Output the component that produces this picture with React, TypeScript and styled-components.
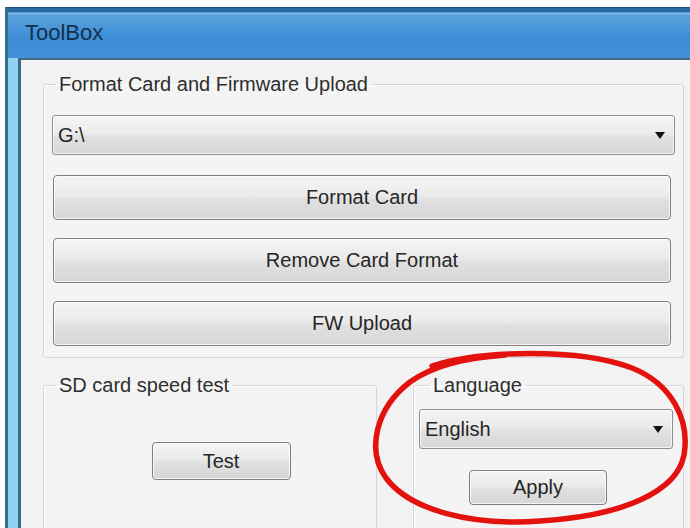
import React from 'react';
import styled, { createGlobalStyle } from 'styled-components';

const GlobalStyle = createGlobalStyle`
  html, body {
    margin: 0;
    padding: 0;
    background: #ffffff;
    overflow: hidden;
  }
  body {
    font-family: 'Liberation Sans', Arial, sans-serif;
    color: #2b2b2b;
  }
`;

const Page = styled.div`
  position: relative;
  width: 690px;
  height: 528px;
  overflow: hidden;
  padding-top: 7px;
  box-sizing: border-box;
`;

const Frame = styled.div`
  margin-left: 5px;
  width: 700px;
  border-top: 1px solid #1b4f80;
  border-left: 3px solid #356c8c;
  background: #8fd1f1;
  display: flex;
  flex-direction: column;
`;

const TitleBar = styled.div`
  height: 50px;
  padding-left: 17px;
  display: flex;
  align-items: center;
  font-size: 22px;
  color: #12314f;
  background: linear-gradient(
    to bottom,
    #2c68a4 0,
    #2c68a4 4px,
    #8cc3ea 5px,
    #5ba2dd 7px,
    #3d8dd5 60%,
    #4392d8 100%
  );
  box-sizing: border-box;
`;

const FrameBody = styled.div`
  display: flex;
  padding-left: 10px;
  height: 500px;
`;

const Client = styled.div`
  flex: 1;
  background: #f2f2f2;
  border-left: 3px solid #3b6983;
  border-top: 2px solid #3f6985;
  padding: 12px 0 0 22px;
  display: flex;
  flex-direction: column;
  gap: 15px;
`;

const Group = styled.fieldset<{ $width: number; $pad: string }>`
  margin: 0;
  width: ${(p) => p.$width}px;
  box-sizing: border-box;
  border: 1px solid #d3d6d9;
  border-radius: 3px;
  box-shadow: inset 1px 1px 0 #ffffff;
  background: #f4f4f4;
  padding: ${(p) => p.$pad};
  min-width: 0;
`;

const Legend = styled.legend<{ $indent: number }>`
  font-size: 20px;
  line-height: 24px;
  padding: 0 3px;
  margin-left: ${(p) => p.$indent}px;
  color: #2e2e2e;
`;

const Stack = styled.div<{ $gap: number }>`
  display: flex;
  flex-direction: column;
  gap: ${(p) => p.$gap}px;
`;

const Combo = styled.div<{ $height: number }>`
  height: ${(p) => p.$height}px;
  box-sizing: border-box;
  border: 1px solid #8e8f8f;
  border-radius: 3px;
  background: linear-gradient(to bottom, #f4f4f4 0%, #ebebeb 45%, #e0e0e0 55%, #d8d8d8 100%);
  box-shadow: inset 0 0 0 1px rgba(255, 255, 255, 0.7);
  display: flex;
  align-items: center;
  justify-content: space-between;
  padding: 0 9px 0 5px;
  font-size: 20px;
  color: #262626;
`;

const Arrow = styled.span`
  width: 0;
  height: 0;
  border-left: 5px solid transparent;
  border-right: 5px solid transparent;
  border-top: 7px solid #111111;
`;

const Button = styled.div<{ $height: number; $width?: number }>`
  height: ${(p) => p.$height}px;
  width: ${(p) => (p.$width ? `${p.$width}px` : 'auto')};
  box-sizing: border-box;
  border: 1px solid #7f7f7f;
  border-radius: 4px;
  background: linear-gradient(to bottom, #f4f4f4 0%, #ebebeb 45%, #e0e0e0 55%, #d6d6d6 100%);
  box-shadow: inset 0 0 0 1px rgba(255, 255, 255, 0.75);
  display: flex;
  align-items: center;
  justify-content: center;
  font-size: 20px;
  color: #262626;
`;

const WideButton = styled(Button)`
  margin: 0 4px 0 1px;
`;

const BottomRow = styled.div`
  display: flex;
  gap: 36px;
  align-items: flex-start;
`;

const Centered = styled.div<{ $shift: number }>`
  display: flex;
  justify-content: center;
  padding-left: ${(p) => Math.max(p.$shift, 0)}px;
  padding-right: ${(p) => Math.max(-p.$shift, 0)}px;
`;

const Annotation = styled.svg`
  position: absolute;
  left: 0;
  top: 0;
  pointer-events: none;
`;

const App = () => {
  return (
    <>
      <GlobalStyle />
      <Page>
        <Frame>
          <TitleBar>ToolBox</TitleBar>
          <FrameBody>
            <Client>
              <Group $width={641} $pad="19px 8px 11px 8px">
                <Legend $indent={4}>Format Card and Firmware Upload</Legend>
                <Stack $gap={20}>
                  <Combo $height={40}>
                    <span>G:\</span>
                    <Arrow />
                  </Combo>
                  <Stack $gap={18}>
                    <WideButton $height={45}>Format Card</WideButton>
                    <WideButton $height={45}>Remove Card Format</WideButton>
                    <WideButton $height={45}>FW Upload</WideButton>
                  </Stack>
                </Stack>
              </Group>
              <BottomRow>
                <Group $width={334} $pad="45px 0 80px 0">
                  <Legend $indent={12}>SD card speed test</Legend>
                  <Centered $shift={22}>
                    <Button $height={38} $width={139}>Test</Button>
                  </Centered>
                </Group>
                <Group $width={271} $pad="12px 10px 70px 5px">
                  <Legend $indent={11}>Language</Legend>
                  <Stack $gap={21}>
                    <Combo $height={40}>
                      <span>English</span>
                      <Arrow />
                    </Combo>
                    <Centered $shift={-16}>
                      <Button $height={35} $width={138}>Apply</Button>
                    </Centered>
                  </Stack>
                </Group>
              </BottomRow>
            </Client>
          </FrameBody>
        </Frame>
        <Annotation width={690} height={528} viewBox="0 0 690 528">
          <path
            d="M 432 366 C 480 350, 580 348, 632 368 C 672 384, 690 420, 684 455 C 677 492, 622 516, 540 521 C 470 526, 410 510, 386 478 C 366 450, 376 408, 410 382 C 432 366, 462 358, 505 355"
            fill="none"
            stroke="#e3120f"
            strokeWidth={5.5}
            strokeLinecap="round"
            strokeLinejoin="round"
          />
        </Annotation>
      </Page>
    </>
  );
};

export default App;
